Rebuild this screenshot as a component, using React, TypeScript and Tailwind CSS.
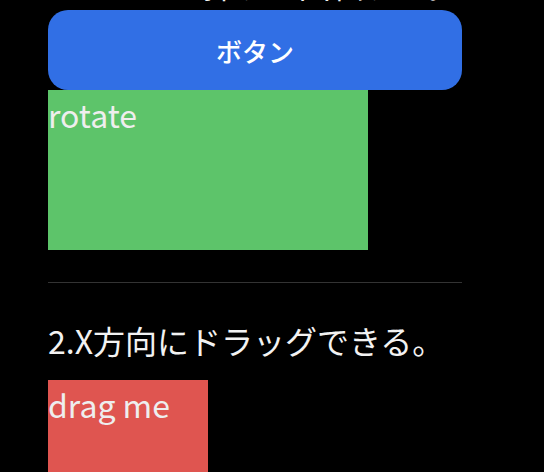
export default function App() {
  return (
    <div className="min-h-screen bg-black overflow-hidden" style={{ fontFamily: '"Noto Sans CJK JP", "Noto Sans", sans-serif' }}>
      <div className="w-[414px] ml-[48px] -mt-[39px]">
        {/* section 1 */}
        <h2 className="text-[32px] leading-[46px] font-normal text-[#f2f2f2]">1.ボタンを押すと回転する。</h2>
        <button className="mt-[3px] w-full h-[80px] rounded-[20px] bg-[#316fe5] text-white text-[26px] font-medium">
          ボタン
        </button>
        <div className="w-[320px] h-[160px] bg-[#5dc46a] text-[#eeeeee] text-[32px] leading-[48px]">rotate</div>

        <hr className="mt-[32px] border-0 border-t border-[#333333]" />

        {/* section 2 */}
        <h2 className="mt-[34px] text-[32px] leading-[46px] font-normal text-[#f2f2f2]">2.X方向にドラッグできる。</h2>
        <div className="mt-[17px] w-[160px] h-[160px] bg-[#df5550] text-[#eeeeee] text-[32px] leading-[48px]">drag me</div>
      </div>
    </div>
  );
}
